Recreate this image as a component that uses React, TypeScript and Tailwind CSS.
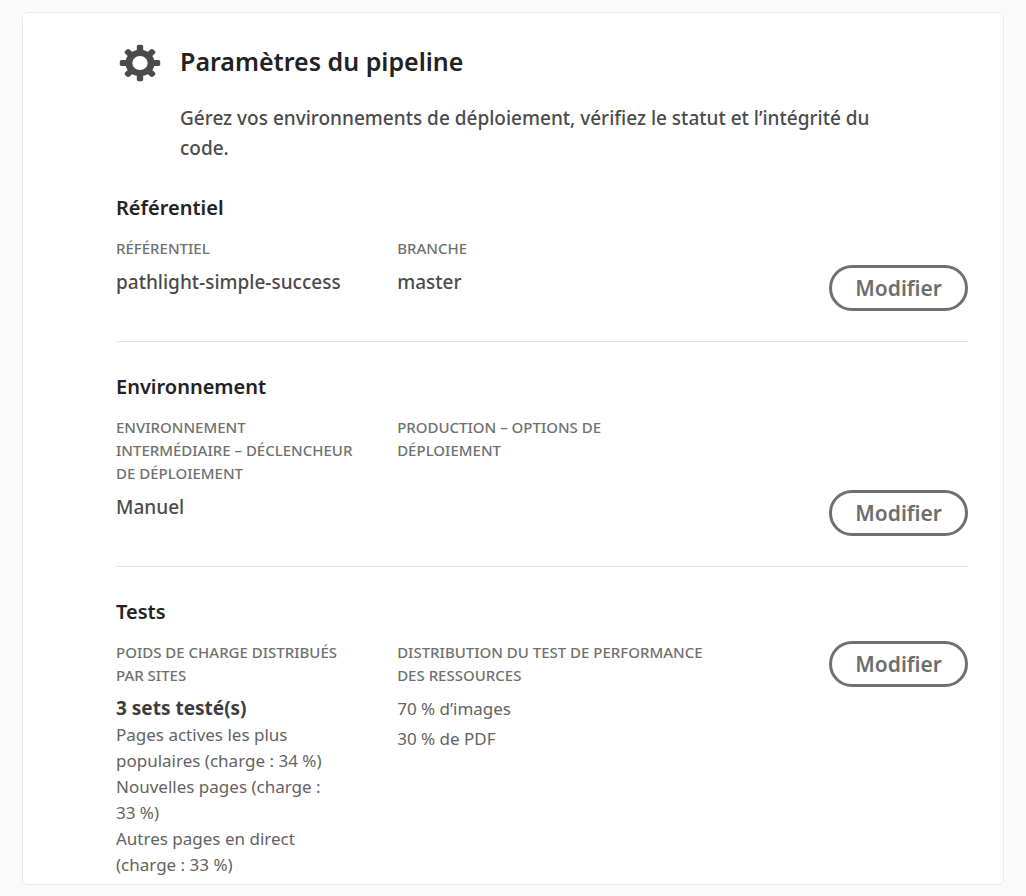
import type { ReactNode } from "react";

const label = "text-[15px] leading-[23px] font-medium text-[#707070] uppercase";
const value = "mt-[7px] text-[19px] leading-[30px] font-medium text-[#4b4b4b]";

function GearIcon() {
  return (
    <svg
      viewBox="0 0 42 38"
      className="mt-[3px] h-[38px] w-[42px] shrink-0"
      aria-hidden="true"
    >
      <g transform="translate(21 19) scale(1 0.9)" fill="#4b4b4b">
        <circle r="14.6" />
        <rect x="-3.2" y="-20.2" width="6.4" height="40.4" rx="1.8" />
        <rect x="-3.2" y="-20.2" width="6.4" height="40.4" rx="1.8" transform="rotate(90)" />
        <rect x="-3.2" y="-20" width="6.4" height="40" rx="2.4" transform="rotate(45)" />
        <rect x="-3.2" y="-20" width="6.4" height="40" rx="2.4" transform="rotate(-45)" />
        <circle r="7.7" fill="#ffffff" />
      </g>
    </svg>
  );
}

function EditButton({ section, className }: { section: string; className: string }) {
  return (
    <button
      type="button"
      aria-label={`Modifier ${section}`}
      className={`ml-auto h-[46px] shrink-0 cursor-pointer rounded-full border-3 border-[#707070] px-[23px] text-[21px] leading-[30px] font-semibold text-[#6e6e6e] hover:bg-gray-50 ${className}`}
    >
      Modifier
    </button>
  );
}

function Section({ title, children, last = false }: { title: string; children: ReactNode; last?: boolean }) {
  return (
    <section className={last ? "pt-[30px]" : "border-b border-[#e3e3e3] pb-[30px] not-first:pt-[30px]"}>
      <h2 className="text-[20px] leading-[30px] font-semibold text-[#222222]">{title}</h2>
      <div className="mt-[14px] flex">{children}</div>
    </section>
  );
}

export default function App() {
  return (
    <div className="min-h-screen bg-[#fafafa] px-[22px] pt-3 pb-3 font-['Noto_Sans',sans-serif]">
      <main className="rounded-[6px] border border-[#eaeaea] bg-white pt-[28px] pr-[35px] pb-[6px] pl-[93px]">
        <header className="mb-[30px] flex gap-[19px] pl-[3px]">
          <GearIcon />
          <div>
            <h1 className="text-[25px] leading-[40px] font-semibold text-[#222222]">Paramètres du pipeline</h1>
            <p className="mt-[22px] max-w-[720px] text-[19px] leading-[30px] font-medium text-[#4b4b4b]">
              Gérez vos environnements de déploiement, vérifiez le statut et l’intégrité du code.
            </p>
          </div>
        </header>

        <div>
          <Section title="Référentiel">
            <div className="w-[33%] pr-10">
              <h3 className={label}>Référentiel</h3>
              <p className={`${value} mb-[14px]`}>pathlight-simple-success</p>
            </div>
            <div className="w-[33%] pr-10">
              <h3 className={label}>Branche</h3>
              <p className={value}>master</p>
            </div>
            <EditButton section="le référentiel" className="self-end" />
          </Section>

          <Section title="Environnement">
            <div className="w-[33%] pr-10">
              <h3 className={label}>Environnement intermédiaire – Déclencheur de déploiement</h3>
              <p className={`${value} mb-[14px]`}>Manuel</p>
            </div>
            <div className="w-[33%] pr-10">
              <h3 className={label}>Production – Options de déploiement</h3>
            </div>
            <EditButton section="l’environnement" className="self-end" />
          </Section>

          <Section title="Tests" last>
            <div className="w-[33%] pr-10">
              <h3 className={label}>Poids de charge distribués par sites</h3>
              <p className="mt-[7px] text-[19px] leading-[28px] font-bold text-[#3c3c3c]">3 sets testé(s)</p>
              <ul className="text-[17px] leading-[26px] text-[#636363]">
                <li>Pages actives les plus populaires (charge : 34 %)</li>
                <li>Nouvelles pages (charge : 33&nbsp;%)</li>
                <li>Autres pages en direct (charge : 33 %)</li>
              </ul>
            </div>
            <div className="w-[38%]">
              <h3 className={label}>Distribution du test de performance des ressources</h3>
              <ul className="mt-[7px] text-[17px] leading-[30px] text-[#636363]">
                <li>70 % d’images</li>
                <li>30 % de PDF</li>
              </ul>
            </div>
            <EditButton section="les tests" className="self-start" />
          </Section>
        </div>
      </main>
    </div>
  );
}
